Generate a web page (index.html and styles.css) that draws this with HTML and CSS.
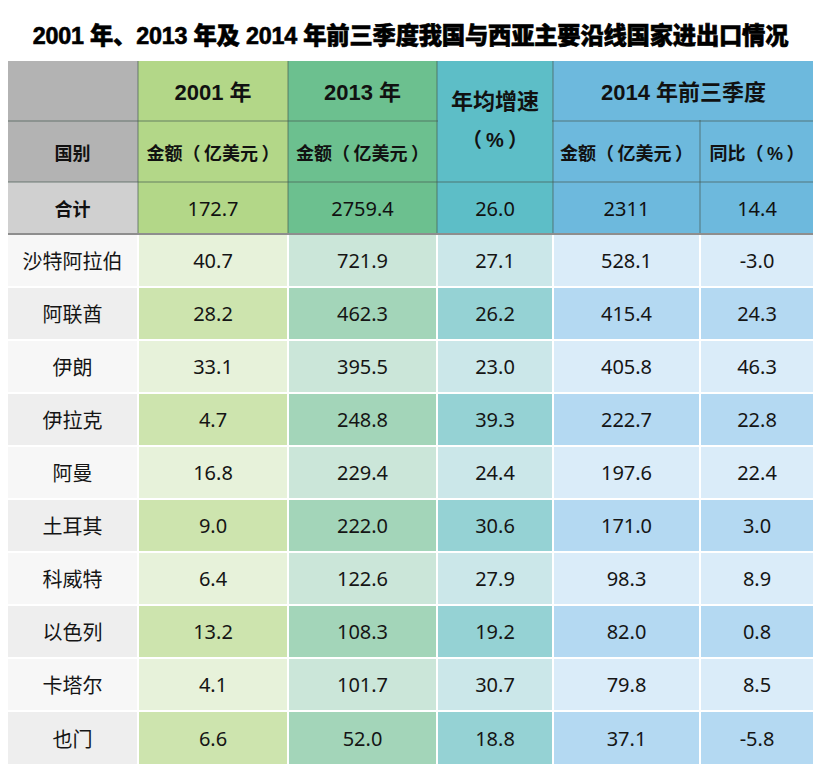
FILE: index.html
```html
<!DOCTYPE html>
<html lang="zh-CN">
<head>
<meta charset="utf-8">
<title>2001 年、2013 年及 2014 年前三季度我国与西亚主要沿线国家进出口情况</title>
<link rel="stylesheet" href="styles.css">
</head>
<body>
<div class="page">
  <h1 class="title">2001 年、2013 年及 2014 年前三季度我国与西亚主要沿线国家进出口情况</h1>
  <table class="data">
    <colgroup>
      <col class="w1"><col class="w2"><col class="w3"><col class="w4"><col class="w5"><col class="w6">
    </colgroup>
    <thead>
      <tr class="h1">
        <th class="c1"></th>
        <th class="c2 big">2001 年</th>
        <th class="c3 big">2013 年</th>
        <th class="c4 big" rowspan="2"><div class="stack"><span>年均增速</span><span class="pct"><span class="po">（</span>%<span class="pc">）</span></span></div></th>
        <th class="c5 big" colspan="2">2014 年前三季度</th>
      </tr>
      <tr class="h2">
        <th class="c1">国别</th>
        <th class="c2">金额<span class="po">（</span>亿美元<span class="pc">）</span></th>
        <th class="c3">金额<span class="po">（</span>亿美元<span class="pc">）</span></th>
        <th class="c5">金额<span class="po">（</span>亿美元<span class="pc">）</span></th>
        <th class="c5">同比<span class="po">（</span>%<span class="pc">）</span></th>
      </tr>
      <tr class="total">
        <th class="c1">合计</th>
        <td class="c2">172.7</td>
        <td class="c3">2759.4</td>
        <td class="c4">26.0</td>
        <td class="c5">2311</td>
        <td class="c5">14.4</td>
      </tr>
    </thead>
    <tbody>
      <tr><td class="c1">沙特阿拉伯</td><td class="c2">40.7</td><td class="c3">721.9</td><td class="c4">27.1</td><td class="c5">528.1</td><td class="c5">-3.0</td></tr>
      <tr><td class="c1">阿联酋</td><td class="c2">28.2</td><td class="c3">462.3</td><td class="c4">26.2</td><td class="c5">415.4</td><td class="c5">24.3</td></tr>
      <tr><td class="c1">伊朗</td><td class="c2">33.1</td><td class="c3">395.5</td><td class="c4">23.0</td><td class="c5">405.8</td><td class="c5">46.3</td></tr>
      <tr><td class="c1">伊拉克</td><td class="c2">4.7</td><td class="c3">248.8</td><td class="c4">39.3</td><td class="c5">222.7</td><td class="c5">22.8</td></tr>
      <tr><td class="c1">阿曼</td><td class="c2">16.8</td><td class="c3">229.4</td><td class="c4">24.4</td><td class="c5">197.6</td><td class="c5">22.4</td></tr>
      <tr><td class="c1">土耳其</td><td class="c2">9.0</td><td class="c3">222.0</td><td class="c4">30.6</td><td class="c5">171.0</td><td class="c5">3.0</td></tr>
      <tr><td class="c1">科威特</td><td class="c2">6.4</td><td class="c3">122.6</td><td class="c4">27.9</td><td class="c5">98.3</td><td class="c5">8.9</td></tr>
      <tr><td class="c1">以色列</td><td class="c2">13.2</td><td class="c3">108.3</td><td class="c4">19.2</td><td class="c5">82.0</td><td class="c5">0.8</td></tr>
      <tr><td class="c1">卡塔尔</td><td class="c2">4.1</td><td class="c3">101.7</td><td class="c4">30.7</td><td class="c5">79.8</td><td class="c5">8.5</td></tr>
      <tr><td class="c1">也门</td><td class="c2">6.6</td><td class="c3">52.0</td><td class="c4">18.8</td><td class="c5">37.1</td><td class="c5">-5.8</td></tr>
    </tbody>
  </table>
</div>
</body>
</html>
```

FILE: styles.css
```css
html, body {
  margin: 0;
  padding: 0;
  background: #ffffff;
}

.page {
  padding: 0 10px 0 8px;
  font-family: "Noto Sans", "Noto Sans CJK SC", sans-serif;
  color: #111;
}

.title {
  margin: 0;
  height: 61px;
  display: flex;
  align-items: center;
  justify-content: center;
  padding-top: 6px;
  box-sizing: border-box;
  font-family: "Liberation Sans", "Noto Sans CJK SC", sans-serif;
  font-weight: 900;
  font-size: 23.3px;
  letter-spacing: -0.2px;
  -webkit-text-stroke: 0.6px #000;
  color: #000;
  white-space: nowrap;
}

.data {
  width: 805px;
  table-layout: fixed;
  border-collapse: collapse;
}

.w1 { width: 130px; }
.w2 { width: 150px; }
.w3 { width: 149px; }
.w4 { width: 116px; }
.w5 { width: 147px; }
.w6 { width: 113px; }

.data th,
.data td {
  padding: 0;
  text-align: center;
  vertical-align: middle;
  white-space: nowrap;
}

/* header */
.data thead th,
.data thead td {
  border: 2px solid rgba(70, 90, 80, 0.35);
  border-top: none;
}
.data thead tr > :first-child { border-left: none; }
.data thead tr > :last-child { border-right: none; }

.data thead th {
  font-family: "Liberation Sans", "Noto Sans CJK SC", sans-serif;
  font-weight: 700;
  font-size: 18px;
  color: #111;
}
.data thead th.big {
  font-size: 22px;
}

.po { padding-right: 0.2em; }
.pc { padding-left: 0.2em; }

.h1 { height: 60px; }
.h2 { height: 61px; }
.total { height: 52px; }

.h1 th.big { padding-bottom: 2px; }
.h2 th { padding-top: 1px; }

.stack {
  display: flex;
  flex-direction: column;
  align-items: center;
  gap: 8px;
  line-height: 31px;
  padding-top: 2px;
}
.stack .pct {
  font-weight: 700;
  font-size: 20px;
}

.total td {
  font-size: 20px;
  font-weight: 400;
}
.total th {
  font-size: 19px;
}
.data thead .total > * {
  border-bottom: 2px solid #8e8e8e;
}

.data thead .c1 { background: #b3b3b3; }
.data thead .total .c1 { background: #d0d0d0; }
.data thead .c2 { background: #b3d788; }
.data thead .c3 { background: #6cc08f; }
.data thead .c4 { background: #5dbec7; }
.data thead .c5 { background: #6db9dd; }

/* body */
.data tbody tr { height: 53px; }
.data tbody td {
  font-size: 20px;
  border: 2px solid #ffffff;
  border-top: none;
  color: #151515;
}
.data tbody tr > :first-child { border-left: none; }
.data tbody tr > :last-child { border-right: none; }
.data tbody tr:last-child td { border-bottom: none; }

.data tbody tr:nth-child(odd) .c1 { background: #f7f7f7; }
.data tbody tr:nth-child(even) .c1 { background: #eeeeee; }
.data tbody tr:nth-child(odd) .c2 { background: #e7f2da; }
.data tbody tr:nth-child(even) .c2 { background: #cde4ae; }
.data tbody tr:nth-child(odd) .c3 { background: #cbe6d9; }
.data tbody tr:nth-child(even) .c3 { background: #a3d5b9; }
.data tbody tr:nth-child(odd) .c4 { background: #cbe7e9; }
.data tbody tr:nth-child(even) .c4 { background: #95d2d4; }
.data tbody tr:nth-child(odd) .c5 { background: #daecf9; }
.data tbody tr:nth-child(even) .c5 { background: #b4d9f2; }
```
